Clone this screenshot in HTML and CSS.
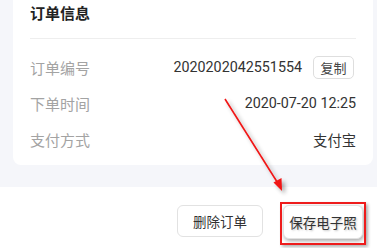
FILE: index.html
```html
<!DOCTYPE html>
<html lang="zh-CN">
<head>
<meta charset="utf-8">
<link rel="stylesheet" href="styles.css">
</head>
<body>
<div class="page">
  <div class="top">
    <div class="card">
      <div class="title">订单信息</div>
      <div class="rows">
        <div class="row">
          <span class="label">订单编号</span>
          <span class="value-group"><span class="value">2020202042551554</span><span class="copy">复制</span></span>
        </div>
        <div class="row">
          <span class="label">下单时间</span>
          <span class="value">2020-07-20 12:25</span>
        </div>
        <div class="row">
          <span class="label">支付方式</span>
          <span class="value">支付宝</span>
        </div>
      </div>
    </div>
  </div>
  <div class="bottom">
    <button class="btn">删除订单</button>
    <button class="btn save">保存电子照</button>
  </div>
  <div class="highlight"></div>
  <svg class="arrow" width="377" height="248" viewBox="0 0 377 248">
    <defs>
      <filter id="sh" x="-20%" y="-20%" width="140%" height="140%">
        <feGaussianBlur in="SourceAlpha" stdDeviation="2"/>
        <feOffset dx="3" dy="3"/>
        <feComponentTransfer><feFuncA type="linear" slope="0.35"/></feComponentTransfer>
        <feMerge><feMergeNode/><feMergeNode in="SourceGraphic"/></feMerge>
      </filter>
    </defs>
    <g filter="url(#sh)">
      <line x1="225" y1="99" x2="279" y2="185" stroke="#f01414" stroke-width="1.6"/>
      <polygon points="282,191 273.5,182.5 281.5,178" fill="#f01414"/>
    </g>
  </svg>
</div>
</body>
</html>
```
FILE: styles.css
```css
* { box-sizing: border-box; }
html, body { margin: 0; padding: 0; }
body {
  width: 377px;
  height: 248px;
  overflow: hidden;
  background: #fff;
  font-family: Roboto, "Noto Sans CJK SC", sans-serif;
}
.page { position: relative; width: 377px; height: 248px; }
.top {
  background: #f5f6fa;
  padding: 0 4px 22px 13px;
}
.card {
  background: #fff;
  border-radius: 0 0 8px 8px;
  padding: 0 17px 8px 17px;
}
.title {
  height: 39px;
  line-height: 28px;
  font-size: 15px;
  font-weight: bold;
  color: #222;
  border-bottom: 1px solid #eeeeee;
}
.rows { padding-top: 10px; }
.row {
  height: 36px;
  display: flex;
  align-items: center;
  justify-content: space-between;
}
.label { font-size: 15px; color: #a3a3a3; }
.value { font-size: 14.3px; color: #333; }
.value-group { display: flex; align-items: center; }
.copy {
  margin-left: 11px;
  margin-right: 2px;
  width: 41px;
  height: 23px;
  border: 1px solid #dedede;
  border-radius: 5px;
  font-size: 13px;
  color: #444;
  display: flex;
  align-items: center;
  justify-content: center;
}
.bottom {
  display: flex;
  justify-content: flex-end;
  gap: 20px;
  padding: 18px 14px 0 0;
}
.btn {
  width: 86px;
  height: 32px;
  background: #fff;
  border: 1px solid #e2e2e2;
  border-radius: 6px;
  font-family: Roboto, "Noto Sans CJK SC", sans-serif;
  font-size: 13.5px;
  color: #333;
  padding: 0;
}
.save {
  width: 80px;
  height: 34px;
  box-shadow: 1px 2px 4px rgba(0,0,0,0.35);
  text-shadow: 1px 1px 2px rgba(0,0,0,0.25);
}
.highlight {
  position: absolute;
  left: 280px;
  top: 202px;
  width: 86px;
  height: 43px;
  border: 2px solid #ee1c1c;
  box-shadow: 2px 2px 3px rgba(0,0,0,0.3);
}
.arrow { position: absolute; left: 0; top: 0; pointer-events: none; }
```
